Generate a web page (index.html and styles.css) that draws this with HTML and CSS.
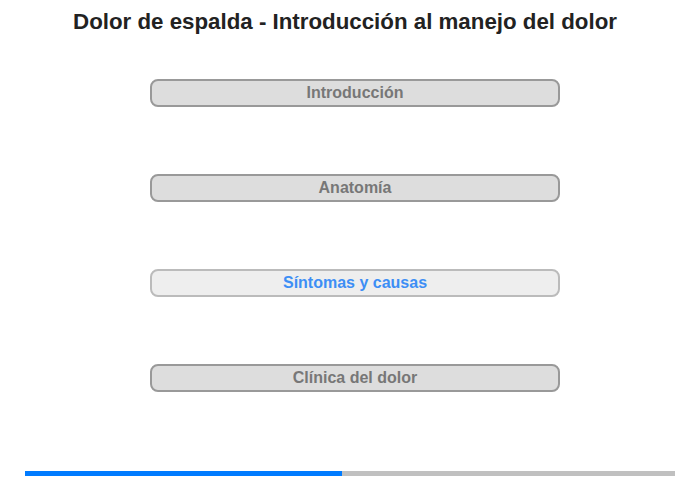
FILE: index.html
```html
<!DOCTYPE html>
<html lang="es">
<head>
    <meta charset="UTF-8">
    <meta name="viewport" content="width=device-width, initial-scale=1.0">
    <title>Dolor de espalda</title>
    <link rel="stylesheet" href="styles.css">
</head>
<body>
    <h1 class="title">Dolor de espalda - Introducción al manejo del dolor</h1>

    <!-- secciones -->
    <div class="menu">
        <button class="item">Introducción</button>
        <button class="item">Anatomía</button>
        <button class="item active">Síntomas y causas</button>
        <button class="item">Clínica del dolor</button>
    </div>

    <!-- progreso -->
    <div class="progress">
        <div class="progress-fill" style="width: 48.8%"></div>
    </div>
</body>
</html>
```

FILE: styles.css
```css
body {
    margin: 0;
    font-family: "Liberation Sans", Arial, Helvetica, sans-serif;
    background-color: #fff;
}
.title {
    margin: 9px 0 0 0;
    padding-right: 10px;
    font-size: 22.3px;
    line-height: 26px;
    font-weight: bold;
    color: #222;
    text-align: center;
}
.menu {
    display: flex;
    flex-direction: column;
    gap: 67px;
    margin: 44px 0 0 150px;
    width: 410px;
}
.item {
    height: 28px;
    padding: 0;
    border: 2px solid #999;
    border-radius: 8px;
    background-color: #ddd;
    color: #777;
    font-family: inherit;
    font-size: 16px;
    font-weight: bold;
    text-align: center;
}
.item.active {
    border-color: #bbb;
    background-color: #eee;
    color: #3d8ef5;
}
.progress {
    margin: 79px 25px 0 25px;
    height: 5px;
    background-color: #c0c0c0;
}
.progress-fill {
    height: 100%;
    background-color: #007bff;
}
```
